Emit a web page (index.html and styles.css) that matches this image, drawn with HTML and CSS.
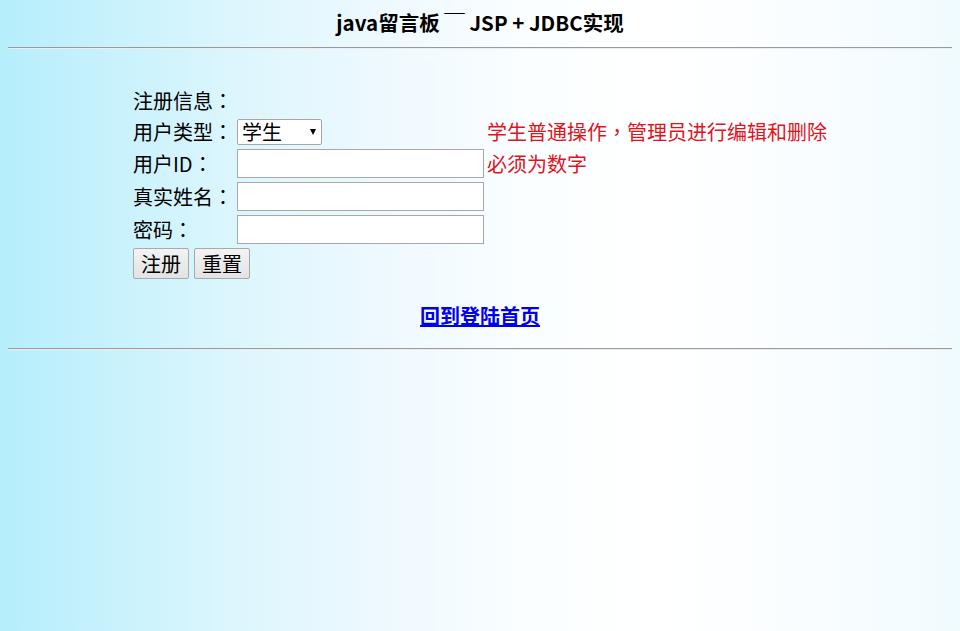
FILE: index.html
```html
<!DOCTYPE html>
<html>
<head>
<meta charset="utf-8">
<link rel="stylesheet" href="styles.css">
</head>
<body>
<h1 class="title">java留言板 ￣ JSP + JDBC实现</h1>
<hr class="rule">
<form class="reg">
<table class="grid">
<tr class="head"><td class="label">注册信息<span class="p">：</span></td><td></td><td></td></tr>
<tr><td class="label">用户类型<span class="p">：</span></td><td><span class="selwrap"><select class="sel"><option>学生</option><option>管理员</option></select></span></td><td class="tip">学生普通操作<span class="p">，</span>管理员进行编辑和删除</td></tr>
<tr><td class="label">用户ID<span class="p">：</span></td><td><input class="field" type="text"></td><td class="tip">必须为数字</td></tr>
<tr><td class="label">真实姓名<span class="p">：</span></td><td><input class="field" type="text"></td><td></td></tr>
<tr><td class="label">密码<span class="p">：</span></td><td><input class="field" type="password"></td><td></td></tr>
<tr><td colspan="3"><div class="btns"><button type="submit" class="btn">注册</button><button type="reset" class="btn">重置</button></div></td></tr>
</table>
</form>
<p class="back"><a href="#">回到登陆首页</a></p>
<hr class="rule rule-end">
</body>
</html>
```
FILE: styles.css
```css
html, body { height: 100%; }
body {
  margin: 8px;
  font-family: "Noto Sans CJK SC", "Noto Sans", sans-serif;
  color: #000;
  background: linear-gradient(to right, #b6eefc 0%, #ddf6fd 25%, #eef9ff 40%, #fafeff 55%, #ffffff 68%, #f9fdff 85%, #f0fbff 100%);
}
.title {
  font-size: 20.5px;
  font-weight: bold;
  text-align: center;
  margin: 0;
  line-height: 28px;
}
.rule {
  border: 0;
  border-top: 1px solid #9a9a9a;
  border-bottom: 1px solid #eeeeee;
  margin: 11px 0 0 0;
  height: 0;
}
.rule-end { margin-top: 0; }
.p { font-family: "Noto Sans CJK TC", sans-serif; }
.reg { margin: 34px 0 0 122px; }
.grid { border-collapse: separate; border-spacing: 3px 4px; }
.grid td { padding: 0; font-size: 20px; line-height: 24px; vertical-align: middle; white-space: nowrap; }
.grid td.label { padding-right: 1px; }
.head td { height: 28px; }
.tip { color: #e0141e; }
.selwrap { position: relative; display: block; width: 85px; height: 26px; }
.selwrap::after {
  content: "";
  position: absolute;
  right: 6px;
  top: 10px;
  border-left: 3px solid transparent;
  border-right: 3px solid transparent;
  border-top: 6px solid #000;
  pointer-events: none;
}
.sel {
  display: block;
  -webkit-appearance: none;
  appearance: none;
  font-family: "Noto Sans CJK SC", sans-serif;
  font-size: 20px;
  width: 85px;
  height: 26px;
  padding: 0 0 0 4px;
  border: 1px solid #a6a6a6;
  border-radius: 2px;
  background: #fff;
  color: #000;
  line-height: 24px;
  margin: 0;
}
.field {
  display: block;
  width: 247px;
  height: 29px;
  box-sizing: border-box;
  border: 1px solid #a8a8a8;
  background: #fff;
  margin: 0;
}
.btns { display: flex; gap: 5px; }
.btn {
  font-family: "Noto Sans CJK SC", sans-serif;
  font-size: 20px;
  line-height: 24px;
  height: 31px;
  width: 56px;
  padding: 0;
  border: 1px solid #a9a9a9;
  border-radius: 2px;
  background: linear-gradient(#f3f3f3, #e3e3e3);
  color: #000;
}
.back {
  text-align: center;
  margin: 19px 0 18px 0;
  font-size: 20px;
  line-height: 28px;
  font-weight: bold;
}
.back a { color: #0000ee; }
```
